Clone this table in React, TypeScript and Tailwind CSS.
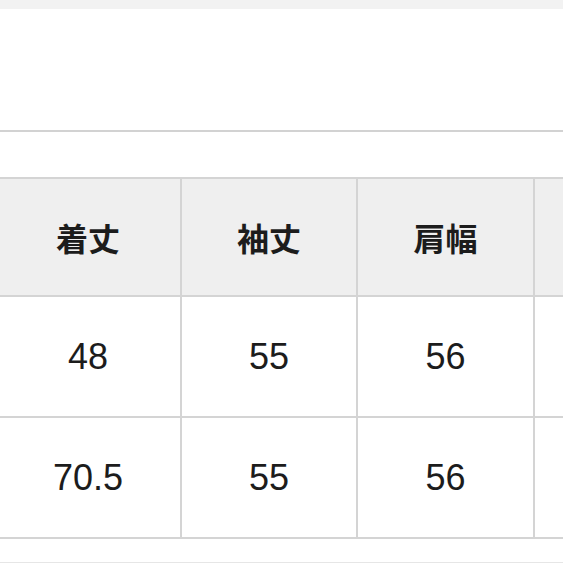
import React from "react";

const headers = ["着丈", "袖丈", "肩幅", ""];
const rows = [
  ["48", "55", "56", ""],
  ["70.5", "55", "56", ""],
];
const widths = ["w-[182px] pr-[4px]", "w-[176px]", "w-[177px]", "w-[60px]"];

export default function App() {
  return (
    <div className="w-[563px] h-[563px] overflow-hidden bg-white flex flex-col">
      <div className="h-[9px] bg-[#f2f2f2] shrink-0" />
      <div className="h-[121px] shrink-0" />
      <div className="h-[2px] bg-[#d2d2d2] shrink-0" />
      <div className="h-[45px] shrink-0" />
      <div className="border-t-2 border-[#d4d4d4] flex flex-col w-[600px] shrink-0">
        <div className="flex h-[118px] border-b-2 border-[#d4d4d4] bg-[#efefef]">
          {headers.map((h, i) => (
            <div
              key={i}
              className={`${widths[i]} shrink-0 flex items-center justify-center ${i < 3 ? "border-r-2 border-[#d4d4d4]" : ""}`}
            >
              <span
                className="text-[32px] font-bold text-[#1c1c1c] leading-none"
                style={{ fontFamily: '"Noto Sans CJK JP", "Noto Sans", sans-serif' }}
              >
                {h}
              </span>
            </div>
          ))}
        </div>
        {rows.map((r, ri) => (
          <div key={ri} className="flex h-[121px] border-b-2 border-[#d4d4d4] bg-white">
            {r.map((c, i) => (
              <div
                key={i}
                className={`${widths[i]} shrink-0 flex items-center justify-center ${i < 3 ? "border-r-2 border-[#d4d4d4]" : ""}`}
              >
                <span
                  className="text-[36px] text-[#1c1c1c] leading-none"
                  style={{ fontFamily: '"Liberation Sans", Arial, sans-serif' }}
                >
                  {c}
                </span>
              </div>
            ))}
          </div>
        ))}
      </div>
      <div className="h-[23px] shrink-0" />
      <div className="h-[1px] bg-[#e6e6e6] shrink-0" />
    </div>
  );
}
